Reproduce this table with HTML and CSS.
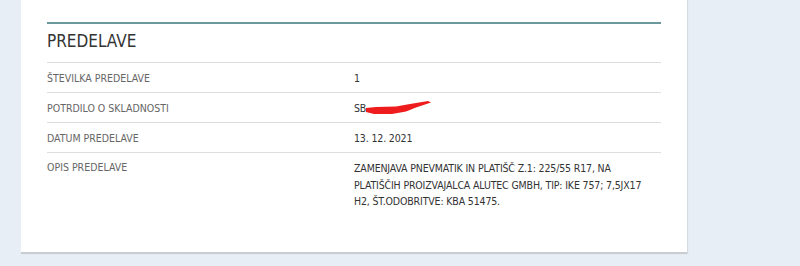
FILE: index.html
```html
<!DOCTYPE html>
<html lang="sl">
<head>
<meta charset="utf-8">
<title>Predelave</title>
<link rel="stylesheet" href="styles.css">
</head>
<body>
<div class="page">
  <section class="card">
    <h2 class="title">PREDELAVE</h2>
    <div class="table">
      <div class="row">
        <div class="label">ŠTEVILKA PREDELAVE</div>
        <div class="value">1</div>
      </div>
      <div class="row">
        <div class="label">POTRDILO O SKLADNOSTI</div>
        <div class="value">SB<span class="redact"><svg width="66" height="14" viewBox="0 0 66 14"><path d="M0 7 L10 6 L30 5.5 L44 3 L62 0 L65 1.5 L50 6.5 L40 10.5 L26 13 L8 13 L0 11 Z" fill="#ee1c1c"/></svg></span></div>
      </div>
      <div class="row">
        <div class="label">DATUM PREDELAVE</div>
        <div class="value">13. 12. 2021</div>
      </div>
      <div class="row last">
        <div class="label">OPIS PREDELAVE</div>
        <div class="value multi">ZAMENJAVA PNEVMATIK IN PLATIŠČ Z.1: 225/55 R17, NA<br>PLATIŠČIH PROIZVAJALCA ALUTEC GMBH, TIP: IKE 757; 7,5JX17<br>H2, ŠT.ODOBRITVE: KBA 51475.</div>
      </div>
    </div>
  </section>
</div>
</body>
</html>
```
FILE: styles.css
```css
html, body {
  margin: 0;
  padding: 0;
}
body {
  background: #e7eef6;
  font-family: "DejaVu Sans Condensed", "DejaVu Sans", sans-serif;
  font-stretch: condensed;
  height: 266px;
  overflow: hidden;
}
.page {
  padding-left: 21px;
}
.card {
  width: 614px;
  background: #fff;
  padding: 22px 26px 36px 26px;
  border-bottom: 2px solid #c9cdd1;
  box-shadow: 1px 0 1px rgba(0,0,0,0.08);
}
.title {
  margin: 0;
  border-top: 2px solid #6a9a9e;
  border-bottom: 1px solid #dedede;
  font-weight: normal;
  font-size: 17px;
  color: #333;
  line-height: 20px;
  padding: 7px 0 11px 0;
}
.row {
  display: grid;
  grid-template-columns: 307px 307px;
  border-bottom: 1px solid #dedede;
  font-size: 10.5px;
  line-height: 15px;
  padding: 8px 0 6px 0;
}
.row.last {
  border-bottom: none;
  padding-top: 7px;
}
.label {
  color: #666;
}
.value {
  color: #333;
  display: flex;
  align-items: center;
  letter-spacing: -0.15px;
}
.value.multi {
  display: block;
  white-space: nowrap;
  line-height: 16.5px;
}
.redact {
  display: inline-flex;
  height: 15px;
  align-items: center;
  transform: translateY(-1px);
}
```
